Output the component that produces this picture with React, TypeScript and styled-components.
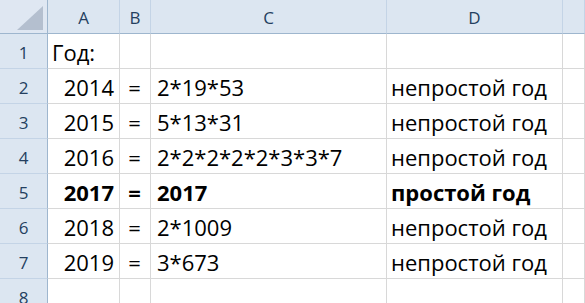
import React from 'react';
import styled, { createGlobalStyle } from 'styled-components';

const GlobalStyle = createGlobalStyle`
  html, body {
    margin: 0;
    padding: 0;
    background: #ffffff;
  }
  body {
    font-family: "Open Sans", "Liberation Sans", Arial, sans-serif;
    overflow: hidden;
  }
`;

const Sheet = styled.div`
  display: grid;
  grid-template-columns: 48px 72px 31px 236px 176px 1fr;
  grid-template-rows: 34px repeat(8, 35px);
  width: 585px;
  height: 303px;
  overflow: hidden;
`;

const Corner = styled.div`
  position: relative;
  background: #dfe7f2;
  border-right: 1px solid #9eb6ce;
  border-bottom: 1px solid #9eb6ce;
  box-sizing: border-box;
`;

const CornerMark = styled.svg`
  position: absolute;
  right: 4px;
  bottom: 3px;
`;

const ColHead = styled.div`
  background: #dce6f1;
  border-right: 1px solid #c4d4e6;
  border-bottom: 1px solid #9eb6ce;
  box-sizing: border-box;
  color: #243f60;
  font-size: 17px;
  line-height: 36px;
  text-align: center;
  overflow: hidden;
`;

const RowHead = styled.div`
  background: #dce6f1;
  border-right: 1px solid #9eb6ce;
  border-bottom: 1px solid #c4d4e6;
  box-sizing: border-box;
  color: #243f60;
  font-size: 17px;
  line-height: 38px;
  text-align: center;
  overflow: hidden;
`;

const Cell = styled.div<{ $align?: 'left' | 'right' | 'center'; $bold?: boolean; $indent?: number }>`
  border-right: 1px solid #d8d8d8;
  border-bottom: 1px solid #d8d8d8;
  box-sizing: border-box;
  color: #000;
  font-size: 22px;
  line-height: 36px;
  font-weight: ${(p) => (p.$bold ? 700 : 400)};
  text-align: ${(p) => p.$align || 'left'};
  padding: 0 5px 0 ${(p) => p.$indent ?? 4}px;
  white-space: nowrap;
  overflow: hidden;
`;

const rows = [
  { year: '2014', factors: '2*19*53', note: 'непростой год' },
  { year: '2015', factors: '5*13*31', note: 'непростой год' },
  { year: '2016', factors: '2*2*2*2*2*3*3*7', note: 'непростой год' },
  { year: '2017', factors: '2017', note: 'простой год', bold: true },
  { year: '2018', factors: '2*1009', note: 'непростой год' },
  { year: '2019', factors: '3*673', note: 'непростой год' },
];

export default function App() {
  return (
    <>
      <GlobalStyle />
      <Sheet>
        <Corner>
          <CornerMark width="26" height="24" viewBox="0 0 26 24">
            <polygon points="0,24 26,24 26,0" fill="#b4bfcf" />
          </CornerMark>
        </Corner>
        <ColHead>A</ColHead>
        <ColHead>B</ColHead>
        <ColHead>C</ColHead>
        <ColHead>D</ColHead>
        <ColHead />

        <RowHead>1</RowHead>
        <Cell>Год:</Cell>
        <Cell />
        <Cell />
        <Cell />
        <Cell />

        {rows.map((r, i) => (
          <React.Fragment key={r.year}>
            <RowHead>{i + 2}</RowHead>
            <Cell $align="right" $bold={r.bold}>{r.year}</Cell>
            <Cell $align="center" $bold={r.bold}>=</Cell>
            <Cell $bold={r.bold} $indent={6}>{r.factors}</Cell>
            <Cell $bold={r.bold}>{r.note}</Cell>
            <Cell />
          </React.Fragment>
        ))}

        <RowHead>8</RowHead>
        <Cell />
        <Cell />
        <Cell />
        <Cell />
        <Cell />
      </Sheet>
    </>
  );
}
